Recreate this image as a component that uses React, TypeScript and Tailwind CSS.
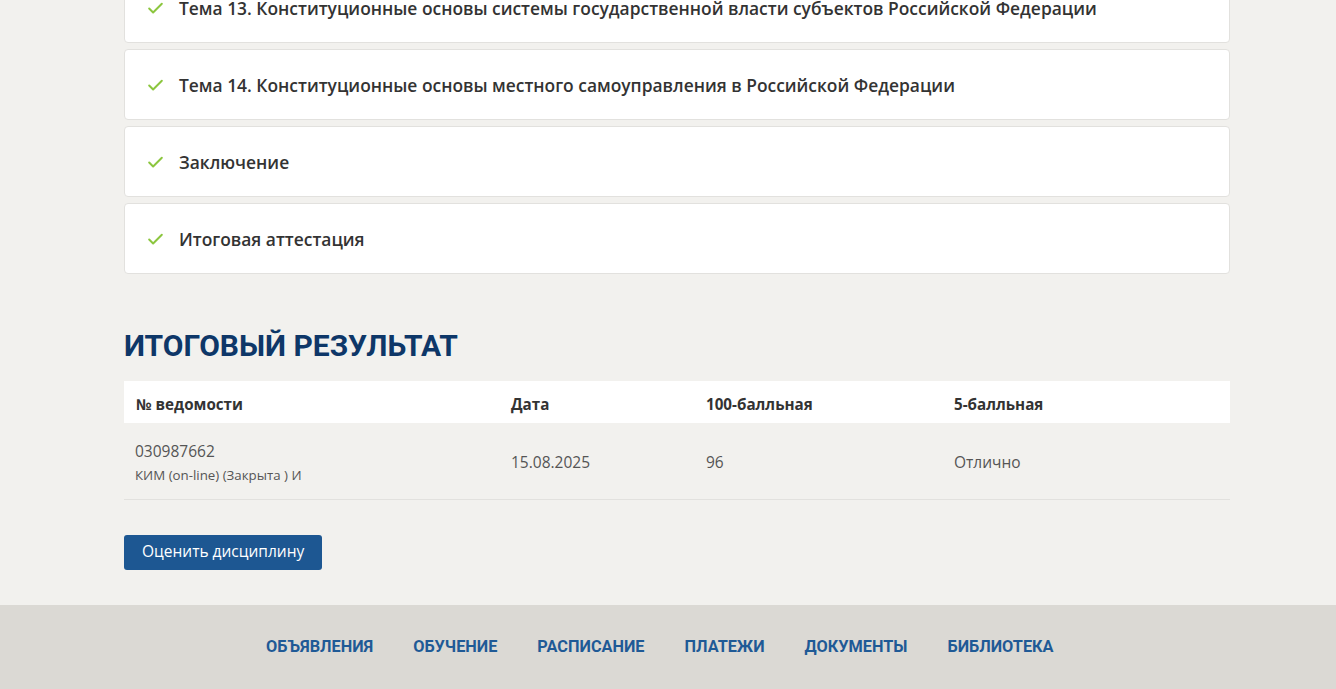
import { Check } from "lucide-react";

const topics = [
  "Тема 13. Конституционные основы системы государственной власти субъектов Российской Федерации",
  "Тема 14. Конституционные основы местного самоуправления в Российской Федерации",
  "Заключение",
  "Итоговая аттестация",
];

const footerLinks = ["ОБЪЯВЛЕНИЯ", "ОБУЧЕНИЕ", "РАСПИСАНИЕ", "ПЛАТЕЖИ", "ДОКУМЕНТЫ", "БИБЛИОТЕКА"];

export default function App() {
  return (
    <div className="min-h-screen overflow-hidden bg-[#f2f1ee] font-['Open_Sans',sans-serif] text-[#333]">
      <main className="ml-[124px] w-[1106px] pb-[35px]">
        <div className="-mt-[28px] flex flex-col gap-[6px]">
          {topics.map((t) => (
            <div
              key={t}
              className="flex h-[71px] items-center rounded-[4px] border border-[#e2e1de] bg-white pl-[21px] pt-[2px]"
            >
              <Check className="h-[19px] w-[19px] text-[#8cc63f]" strokeWidth={2.5} />
              <span className="ml-[14px] text-[17.4px] font-semibold text-[#333]">{t}</span>
            </div>
          ))}
        </div>

        <h2 className="mt-[52px] font-['Roboto',sans-serif] text-[30px] leading-[40px] font-bold text-[#0e3768]">
          ИТОГОВЫЙ РЕЗУЛЬТАТ
        </h2>

        <table className="mt-[15px] w-full border-collapse text-[15.5px]">
          <thead>
            <tr className="h-[42px] bg-white text-left text-[15.2px]">
              <th className="w-[387px] pl-[12px] pt-[4px] font-bold">№ ведомости</th>
              <th className="w-[195px] pt-[4px] font-bold">Дата</th>
              <th className="w-[248px] pt-[4px] font-bold">100-балльная</th>
              <th className="pt-[4px] font-bold">5-балльная</th>
            </tr>
          </thead>
          <tbody>
            <tr className="h-[76px] border-b border-[#e2e1de] text-[#555]">
              <td className="pl-[11px] pt-[3px]">
                <div className="leading-[22px]">030987662</div>
                <div className="mt-[3px] text-[13.3px] leading-[20px]">КИМ (on-line) (Закрыта ) И</div>
              </td>
              <td className="pt-[4px]">15.08.2025</td>
              <td className="pt-[4px]">96</td>
              <td className="pt-[4px]">Отлично</td>
            </tr>
          </tbody>
        </table>

        <button className="mt-[35px] h-[35px] rounded-[3px] bg-[#1d5792] px-[18px] text-[15.5px] text-white">
          Оценить дисциплину
        </button>
      </main>

      <footer className="h-[84px] bg-[#dbd9d4] pt-[30px]">
        <nav className="ml-[266px] flex gap-[40px] font-['Roboto',sans-serif] text-[16.3px] font-bold text-[#1f5a96]">
          {footerLinks.map((l) => (
            <a key={l} href="#">
              {l}
            </a>
          ))}
        </nav>
      </footer>
    </div>
  );
}
